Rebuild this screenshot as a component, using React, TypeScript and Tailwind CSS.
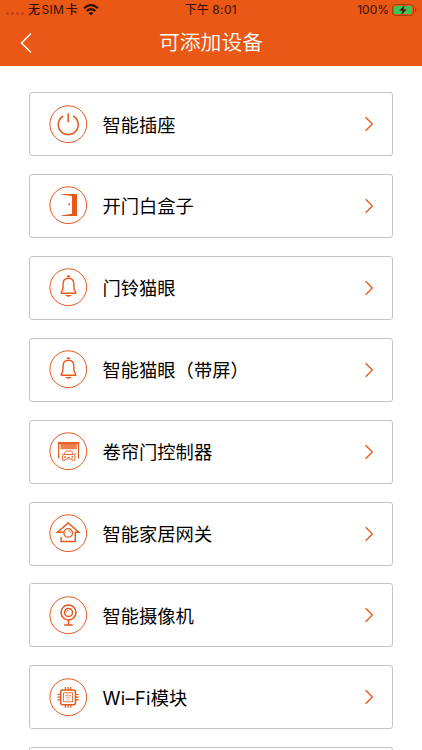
import type { ReactNode } from 'react';

const ORANGE = '#e5581b';

const bell = (
  <g strokeWidth="1.4">
    <path d="M12.700 25.200h13.600c.6 0 .7-.5.400-.9-1.200-1.400-1.800-2.400-1.800-4.600v-3.500c0-3.600-2-6-5.400-6S14 12.600 14 16.200v3.500c0 2.200-.5 3.200-1.700 4.600-.3.400-.2.900.4.900Z" />
    <path d="M17.900 8.500q1.600-1.800 3.200 0Z" fill={ORANGE} strokeWidth="1" />
    <path d="M17.700 27.600q1.800 1.200 3.600 0Z" fill={ORANGE} strokeWidth="1.100" />
  </g>
);

const power = (
  <g strokeWidth="1.500">
    <path d="M14.300 11A10 10 0 1 0 24.200 11" />
    <path d="M19.200 8.200v9" />
  </g>
);

const door = (
  <g fill={ORANGE} stroke="none">
    <path d="M12.300 8H28v22H12.300v-.5l10.700-1.700V9.900L12.300 8.600Z" />
    <circle cx="20.300" cy="18.200" r="1" />
  </g>
);

const garage = (
  <g strokeWidth="1">
    <path d="M9.300 10.600H30v1.200H9.300Z" fill={ORANGE} />
    <path d="M9.700 12v14.500M29.500 12v14.500" strokeWidth="1.200" />
    <path d="M11.500 12h16.300v4.800H11.500Z" fill={ORANGE} fillOpacity=".75" stroke="none" />
    <path d="M11.500 16.800h16.300" strokeWidth=".6" />
    <g strokeWidth=".9">
      <path d="M15.100 22.500 16.500 19.500Q16.800 19 17.400 19h4.600q.6 0 .9.500l1.400 3M15.100 22.500h9.200q1.700.7 1.700 2.400v2.200q0 1.500-1.500 1.500t-1.500-1.600h-6.600q0 1.600-1.500 1.600t-1.500-1.500v-2.200q0-1.700 1.700-2.400ZM12.500 21.700l1.600.7M26.900 21.700l-1.600.7M18.300 25.400h2.800" />
      <circle cx="16" cy="24.900" r=".6" />
      <circle cx="23.400" cy="24.900" r=".6" />
    </g>
  </g>
);

const house = (
  <g strokeWidth="1.450">
    <path d="M14.500 18.200H8.500L19.200 8.900l10.700 9.300h-3.600v9.200H12.100V23" />
    <circle cx="19.200" cy="18.900" r="4.300" strokeWidth="1.300" />
    <path d="M19.600 16.400q1.900.200 2.100 2.100" strokeWidth=".9" />
  </g>
);

const camera = (
  <g strokeWidth="1.500">
    <circle cx="19.500" cy="16.500" r="7.500" />
    <circle cx="19.500" cy="16.500" r="4" />
    <path d="M17.500 16.300q.1-1.700 1.800-1.900" strokeWidth=".8" />
    <path d="M19.500 24v4.900M15.200 29h8.600" />
  </g>
);

const chip = (
  <g strokeWidth="1.200">
    <rect x="11.700" y="11.900" width="14.800" height="14.800" rx="2" strokeWidth="1.500" />
    <rect x="14.600" y="14.800" width="9" height="9" strokeWidth=".8" />
    <path d="M16.400 9v2.800M19.100 9v2.800M21.800 9v2.800M16.400 26.900v2.900M19.100 26.900v2.900M21.800 26.900v2.900M8.500 16.500h3M8.500 19.200h3M8.500 21.900h3M26.700 16.500h3M26.700 19.200h3M26.700 21.900h3" />
    <path d="M16.200 18q2.900-2.500 5.800 0M17.400 19.600q1.700-1.300 3.400 0M19.100 20.600v1.800" strokeWidth=".7" />
  </g>
);

const devices: { name: ReactNode; icon: ReactNode }[] = [
  { name: '智能插座', icon: power },
  { name: '开门白盒子', icon: door },
  { name: '门铃猫眼', icon: bell },
  { name: '智能猫眼（带屏）', icon: bell },
  { name: '卷帘门控制器', icon: garage },
  { name: '智能家居网关', icon: house },
  { name: '智能摄像机', icon: camera },
  { name: <><span className="tracking-[0.300px]">Wi–Fi</span>模块</>, icon: chip },
  { name: '', icon: null },
];

function StatusBar() {
  return (
    <div className="grid h-5 grid-cols-3 items-center px-[6px] text-[12px] leading-5 text-[#351006]">
      <div className="flex items-center">
        <div className="mt-[7px] flex w-[22px] gap-[2.500px]">
          {[0, 1, 2, 3].map((i) => (
            <i key={i} className="size-[2.500px] rounded-full bg-[#c04312]" />
          ))}
        </div>
        <span className="whitespace-nowrap font-medium">无<span className="mx-[1.500px] font-normal tracking-[0.300px]">SIM</span>卡</span>
        <svg className="ml-[5px] h-[12px] w-[16px]" viewBox="0 0 16 12" fill="none" stroke="#351006" strokeWidth="2.200">
          <path d="M1 4.300q7-6.200 14 0M3.600 7q4.400-3.800 8.800 0" />
          <path d="M8 11.500 5.600 9.100q2.400-2 4.800 0Z" fill="#351006" stroke="none" />
        </svg>
      </div>
      <div className="whitespace-nowrap text-center">下午 <span className="tracking-[0.400px]">8:01</span></div>
      <div className="-mr-[1px] flex items-center justify-end gap-[3px]">
        <span className="text-[12px]">100%</span>
        <svg className="h-[12px] w-[25px]" viewBox="0 0 25 12">
          <rect x=".5" y=".5" width="21" height="11" rx="3" fill="none" stroke="#9a4312" />
          <rect x="2" y="2" width="18" height="8" rx="1.600" fill="#36c759" />
          <path d="M23 4v4q1.500-.5 1.500-2T23 4Z" fill="#9a4312" />
          <path d="m12.800.8-5.600 6h3.200l-1.200 4.500 5.600-6h-3.200Z" fill="#26150a" stroke="#e5581b" strokeWidth=".4" />
        </svg>
      </div>
    </div>
  );
}

export default function App() {
  return (
    <div className="h-[750px] overflow-hidden bg-white font-['Inter','Noto_Sans_CJK_SC',sans-serif]">
      <header className="h-[65.500px] bg-[#e95814]">
        <StatusBar />
        <div className="grid h-[45px] grid-cols-[60px_1fr_60px] items-center">
          <svg className="ml-[20px] h-[22px] w-[12px]" viewBox="0 0 12 22" fill="none" stroke="#fff" strokeWidth="1.500">
            <path d="M11 1.500 1.500 11 11 20.500" />
          </svg>
          <h1 className="text-center text-[20.800px] font-[350] leading-[44px] text-white">可添加设备</h1>
        </div>
      </header>
      <main className="flex flex-col gap-[17.900px] px-[29px] pt-[26.600px]">
        {devices.map((device, index) => (
          <div
            key={index}
            className="flex h-[64px] w-[364px] shrink-0 items-center rounded-[3px] border border-[#c4c4c4] bg-white pl-[19px] pr-[18px]"
          >
            {device.icon && (
              <>
                <svg className="size-[39px] shrink-0" viewBox="0 0 39 39" fill="none" stroke={ORANGE}>
                  <circle cx="19.300" cy="19.200" r="18.400" strokeWidth="1" />
                  {device.icon}
                </svg>
                <span className="ml-[14.500px] flex-1 whitespace-nowrap pt-[1px] text-[18.300px] leading-[28px] text-black">{device.name}</span>
                <svg className="h-[16px] w-[10px]" viewBox="0 0 10 16" fill="none" stroke={ORANGE} strokeWidth="1.300">
                  <path d="m1.700 1.300 6.600 6.700-6.600 6.700" />
                </svg>
              </>
            )}
          </div>
        ))}
      </main>
    </div>
  );
}
